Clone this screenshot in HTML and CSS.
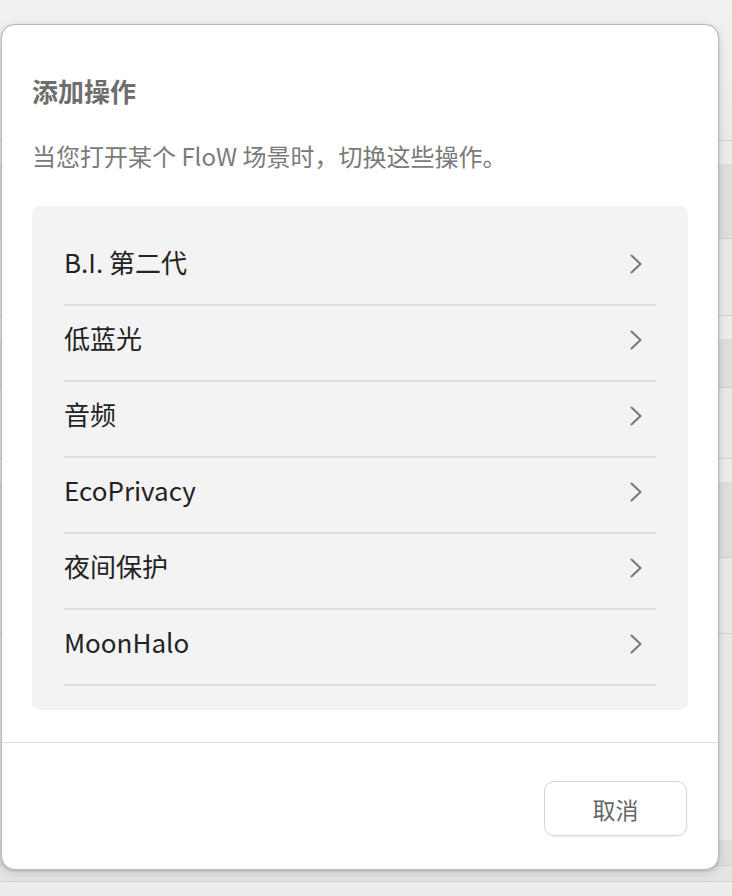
FILE: index.html
```html
<!DOCTYPE html>
<html lang="zh-CN">
<head>
<meta charset="utf-8">
<title>添加操作</title>
<link rel="stylesheet" href="styles.css">
</head>
<body>
<div class="dialog" role="dialog" aria-labelledby="dlg-title">
  <div class="dialog-body">
    <h2 class="dialog-title" id="dlg-title">添加操作</h2>
    <p class="dialog-desc">当您打开某个 FloW 场景时，切换这些操作。</p>
    <ul class="action-list">
      <li class="action-item"><span class="action-name">B.I. 第二代</span><svg class="chev" viewBox="0 0 12 20"><path d="M1.5 1.5 L10.5 10 L1.5 18.5"/></svg></li>
      <li class="action-item"><span class="action-name">低蓝光</span><svg class="chev" viewBox="0 0 12 20"><path d="M1.5 1.5 L10.5 10 L1.5 18.5"/></svg></li>
      <li class="action-item"><span class="action-name">音频</span><svg class="chev" viewBox="0 0 12 20"><path d="M1.5 1.5 L10.5 10 L1.5 18.5"/></svg></li>
      <li class="action-item"><span class="action-name">EcoPrivacy</span><svg class="chev" viewBox="0 0 12 20"><path d="M1.5 1.5 L10.5 10 L1.5 18.5"/></svg></li>
      <li class="action-item"><span class="action-name">夜间保护</span><svg class="chev" viewBox="0 0 12 20"><path d="M1.5 1.5 L10.5 10 L1.5 18.5"/></svg></li>
      <li class="action-item"><span class="action-name">MoonHalo</span><svg class="chev" viewBox="0 0 12 20"><path d="M1.5 1.5 L10.5 10 L1.5 18.5"/></svg></li>
    </ul>
  </div>
  <div class="dialog-footer">
    <button class="btn-cancel" type="button">取消</button>
  </div>
</div>
</body>
</html>
```

FILE: styles.css
```css
html, body {
  margin: 0;
  padding: 0;
  height: 896px;
  overflow: hidden;
}

body {
  font-family: "Noto Sans CJK SC", "Noto Sans", sans-serif;
  background:
    linear-gradient(to bottom,
      #f1f1f1 0, #ebebeb 140px,
      #cfcfcf 140px, #cfcfcf 141px,
      #ececec 141px, #ececec 164px,
      #dedede 164px, #dedede 238px,
      #cfcfcf 238px, #cfcfcf 239px,
      #e9e9e9 239px, #e9e9e9 315px,
      #cfcfcf 315px, #cfcfcf 316px,
      #ececec 316px, #ececec 339px,
      #dedede 339px, #dedede 387px,
      #cfcfcf 387px, #cfcfcf 388px,
      #e9e9e9 388px, #e9e9e9 458px,
      #cfcfcf 458px, #cfcfcf 459px,
      #ececec 459px, #ececec 482px,
      #dedede 482px, #dedede 557px,
      #cfcfcf 557px, #cfcfcf 558px,
      #e9e9e9 558px, #e9e9e9 633px,
      #cfcfcf 633px, #cfcfcf 634px,
      #e9e9e9 634px, #e9e9e9 840px,
      #dedede 840px, #dedede 865px,
      #cfcfcf 865px, #cfcfcf 866px,
      #e4e4e4 866px, #e4e4e4 881px,
      #d2d2d2 881px, #d2d2d2 882px,
      #ededed 882px, #ededed 896px);
}

.dialog {
  position: absolute;
  top: 24px;
  left: 1px;
  width: 718px;
  height: 846px;
  box-sizing: border-box;
  background: #ffffff;
  border: 1px solid #b9b9b9;
  border-radius: 14px;
  box-shadow: 0 1px 3px rgba(0, 0, 0, 0.18), 0 3px 12px rgba(0, 0, 0, 0.10);
  display: flex;
  flex-direction: column;
}

.dialog-body {
  padding: 48px 30px 32px 30px;
  border-bottom: 1px solid #dcdcdc;
}

.dialog-title {
  margin: 0;
  font-size: 26px;
  line-height: 36px;
  font-weight: 700;
  color: #6e6e6e;
}

.dialog-desc {
  margin: 30px 0 0;
  font-size: 24px;
  line-height: 34px;
  color: #7a7a7a;
}

.action-list {
  list-style: none;
  margin: 33px 0 0;
  padding: 24px 32px 24px;
  background: #f3f3f3;
  border-radius: 8px;
}

.action-item {
  box-sizing: border-box;
  height: 76px;
  border-bottom: 2px solid #dddddd;
  display: flex;
  align-items: center;
  justify-content: space-between;
  padding: 0 14px 6px 0;
}

.action-name {
  font-size: 26px;
  line-height: 36px;
  color: #222222;
  padding-bottom: 4px;
}

.chev {
  width: 12px;
  height: 20px;
  fill: none;
  stroke: #777777;
  stroke-width: 2;
  stroke-linecap: round;
  stroke-linejoin: round;
}

.dialog-footer {
  flex: 1;
  display: flex;
  justify-content: flex-end;
  align-items: flex-start;
  padding: 38px 31px 0;
}

.btn-cancel {
  width: 143px;
  height: 55px;
  background: #ffffff;
  border: 1.5px solid #d6d6d6;
  border-radius: 10px;
  font-family: "Noto Sans CJK SC", "Noto Sans", sans-serif;
  font-size: 23px;
  color: #666666;
  padding: 0;
  box-shadow: 0 1px 2px rgba(0, 0, 0, 0.06);
}
```
